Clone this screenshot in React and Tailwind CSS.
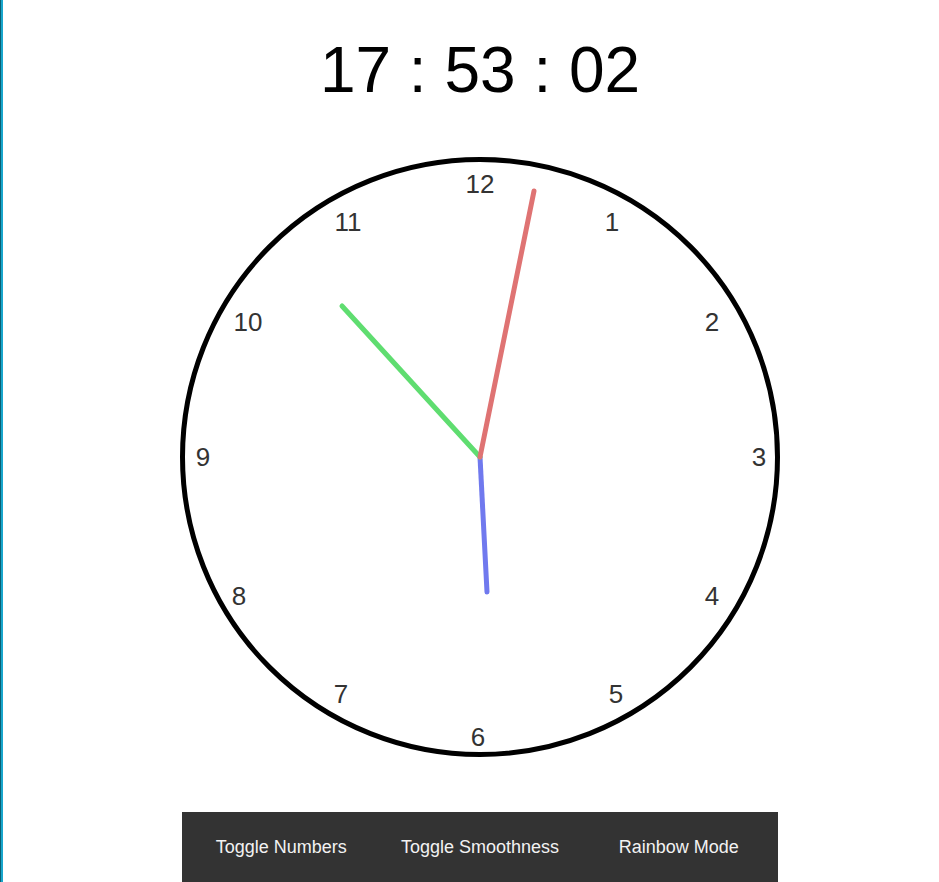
import React from 'react';

const numbers = [
  ['12', 0, -273],
  ['1', 132, -235],
  ['2', 232, -135],
  ['3', 279, 0],
  ['4', 232, 139],
  ['5', 136, 237],
  ['6', -2, 280],
  ['7', -139, 237],
  ['8', -241, 139],
  ['9', -277, 0],
  ['10', -232, -135],
  ['11', -132, -235],
];

const hands = [
  { x: 7, y: 135, color: '#7079ee' },
  { x: -138, y: -151, color: '#5fdd70' },
  { x: 54, y: -266, color: '#df7373' },
];

export default function App() {
  return (
    <div className="flex min-h-[882px] bg-white" style={{ fontFamily: '"Liberation Sans", Arial, sans-serif' }}>
      <div className="w-[1px] shrink-0 bg-[#0b5f73]" />
      <div className="w-[2px] shrink-0 bg-[#19a6cc]" />
      <div className="flex flex-1 flex-col items-center pl-[18px] pt-[38px]">
        <div className="text-[64px] leading-[64px] text-black">17 : 53 : 02</div>

        <div className="relative mt-[55px] h-[600px] w-[600px] rounded-full border-[5px] border-black">
          <svg className="absolute -left-[5px] -top-[5px]" width="600" height="600" viewBox="-300 -300 600 600">
            {numbers.map(([n, x, y]) => (
              <text
                key={n}
                x={x}
                y={y}
                textAnchor="middle"
                dominantBaseline="central"
                fontSize="26"
                fill="#333"
                fontFamily='"Liberation Sans", Arial, sans-serif'
              >
                {n}
              </text>
            ))}
            {hands.map((h) => (
              <line key={h.color} x1="0" y1="0" x2={h.x} y2={h.y} stroke={h.color} strokeWidth="5" strokeLinecap="round" />
            ))}
          </svg>
        </div>

        <div className="mt-[55px] flex h-[70px] w-[596px] bg-[#333]">
          {['Toggle Numbers', 'Toggle Smoothness', 'Rainbow Mode'].map((label) => (
            <button key={label} className="flex-1 text-[18px] text-[#f2f2f2]">
              {label}
            </button>
          ))}
        </div>
      </div>
    </div>
  );
}
